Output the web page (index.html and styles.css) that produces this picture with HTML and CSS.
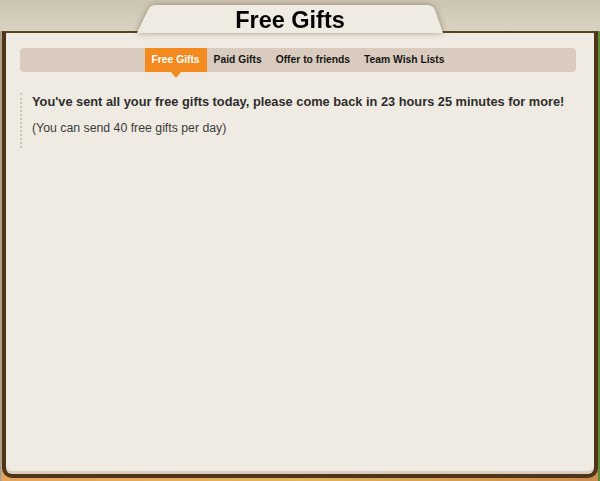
FILE: index.html
```html
<!DOCTYPE html>
<html lang="en">
<head>
  <meta charset="UTF-8" />
  <title>Free Gifts</title>
  <link rel="stylesheet" href="styles.css">
</head>
<body>
  <header class="top">
    <div class="title-wrap">
      <div class="title-tab">
        <h1>Free Gifts</h1>
      </div>
    </div>
  </header>

  <main class="panel">
    <nav class="tabs">
      <a class="tab active">Free Gifts</a>
      <a class="tab">Paid Gifts</a>
      <a class="tab">Offer to friends</a>
      <a class="tab">Team Wish Lists</a>
    </nav>

    <div class="notice">
      <p class="notice-main">You've sent all your free gifts today, please come back in 23 hours 25 minutes for more!</p>
      <p class="notice-sub">(You can send 40 free gifts per day)</p>
    </div>
  </main>
</body>
</html>
```

FILE: styles.css
```css
* {
  box-sizing: border-box;
}
body {
  margin: 0;
  width: 600px;
  height: 481px;
  overflow: hidden;
  background: linear-gradient(to right, #7f9fb6 0, #e3a35d 2px, #e3b25c 50%, #c98b4e 598px, #5f8a3a 598px);
  font-family: 'Liberation Sans', Arial, sans-serif;
}
.top {
  height: 31px;
  display: flex;
  align-items: flex-start;
  padding-left: 137px;
  background: linear-gradient(to bottom, #cdc5b3, #d9d2c2);
}
.title-wrap {
  position: relative;
  z-index: 2;
  margin-top: 5px;
  filter: drop-shadow(0 0 3px rgba(70, 50, 20, 0.45));
}
.title-tab {
  width: 306px;
  height: 28px;
  padding-top: 3px;
  background: #f0ebe2;
  clip-path: path('M0 28 L11 5 Q13 0 19 0 L290 0 Q296 0 298 5 L306 28 Z');
}
.title-tab h1 {
  margin: 0;
  text-align: center;
  font-size: 23.5px;
  line-height: 25px;
  font-weight: bold;
  color: #050505;
}
.panel {
  height: 447px;
  margin: 0 2px;
  background: #f0ebe2;
  border: 4px solid #4e3519;
  border-top-width: 2px;
  border-top-color: #5b4220;
  border-radius: 0 0 10px 10px;
  box-shadow: inset 0 -3px 0 #dacdbe;
}
.tabs {
  display: flex;
  justify-content: center;
  height: 24px;
  margin: 15px 18px 0 14px;
  background: #d9cbbd;
  border-radius: 4px;
}
.tab {
  position: relative;
  padding: 0 7px;
  font-size: 10.3px;
  font-weight: bold;
  line-height: 24px;
  color: #151515;
  cursor: pointer;
}
.tab.active {
  background: #f28a1f;
  color: #ffffff;
}
.tab.active::after {
  content: '';
  position: absolute;
  left: 50%;
  top: 24px;
  margin-left: -5px;
  border-left: 5px solid transparent;
  border-right: 5px solid transparent;
  border-top: 6px solid #f28a1f;
}
.notice {
  margin: 21px 0 0 14px;
  padding: 1px 10px 12px;
  border-left: 2px dotted #d3c6b5;
}
.notice p {
  margin: 0;
  line-height: 16px;
}
.notice-main {
  font-size: 12.8px;
  font-weight: bold;
  color: #2d2d2d;
}
.notice-sub {
  margin-top: 10px !important;
  font-size: 12.3px;
  color: #3b3b3b;
}
```
